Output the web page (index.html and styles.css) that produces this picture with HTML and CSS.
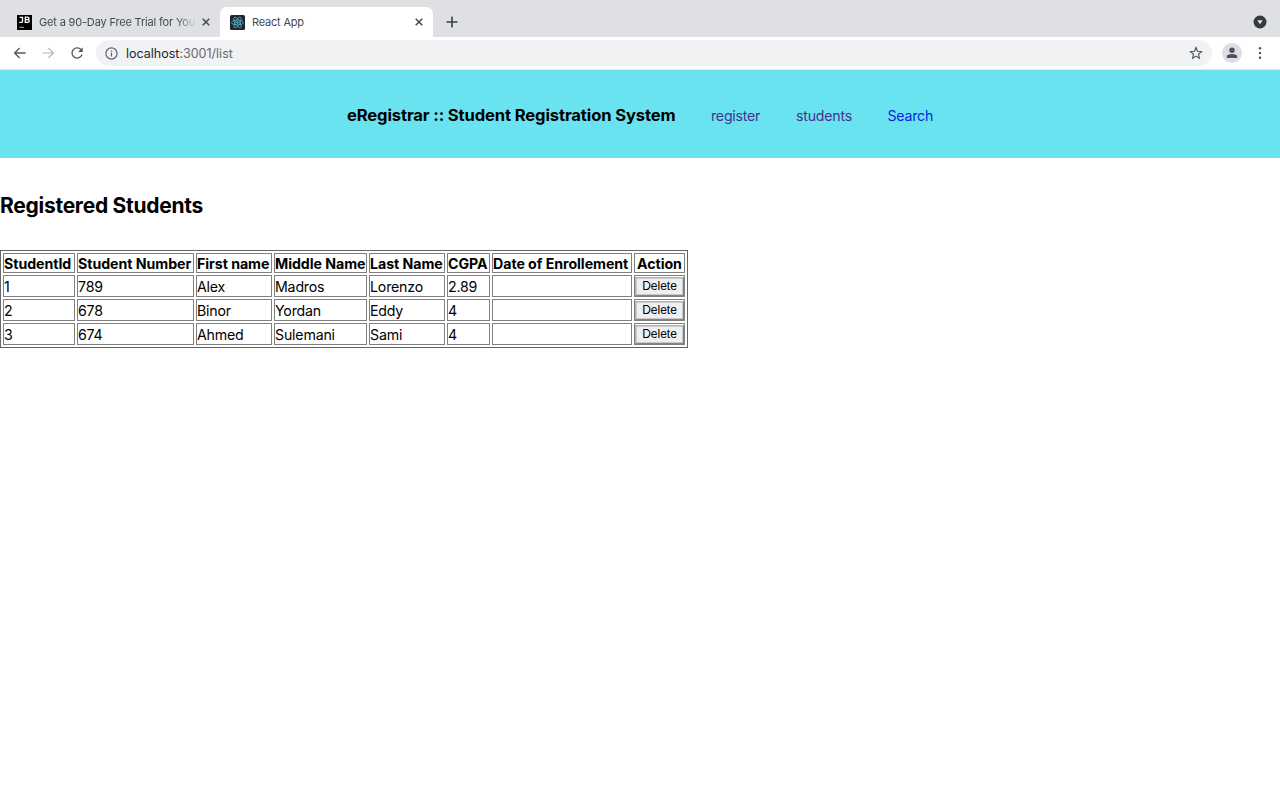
FILE: index.html
```html
<!DOCTYPE html>
<html lang="en">
<head>
<meta charset="utf-8">
<title>React App</title>
<link rel="stylesheet" href="styles.css">
</head>
<body>
<div class="tabstrip">
  <div class="tab tab-idle">
    <svg class="favicon" viewBox="0 0 15 15"><rect width="15" height="15" fill="#000"/><path d="M2.6 2.3h2.9v3.9q0 1.2-1.3 1.2H2.4M8.3 2.2v5.2h2.4q1.5-.1 1.5-1.4 0-1.1-1.2-1.3.9-.3.9-1.2 0-1.3-1.4-1.3zM8.4 4.7h2.5" fill="none" stroke="#fff" stroke-width="1.3"/><path d="M2.5 12.3h4.5" stroke="#ddd" stroke-width=".8"/></svg>
    <span class="tab-title title-fade">Get a 90-Day Free Trial for You</span>
    <svg class="close" viewBox="0 0 8 8"><path d="M.7.7l6.6 6.6M7.3.7L.7 7.3"/></svg>
  </div>
  <div class="tab tab-active">
    <svg class="favicon" viewBox="0 0 15 15"><rect width="15" height="15" rx="1.5" fill="#20262e"/><g fill="none" stroke="#5cb3cc" stroke-width=".8"><ellipse cx="7.5" cy="7.5" rx="6" ry="2.4"/><ellipse cx="7.5" cy="7.5" rx="6" ry="2.4" transform="rotate(60 7.5 7.5)"/><ellipse cx="7.5" cy="7.5" rx="6" ry="2.4" transform="rotate(120 7.5 7.5)"/></g><circle cx="7.5" cy="7.5" r="1.2" fill="#5cb3cc"/></svg>
    <span class="tab-title title-react">React App</span>
    <svg class="close" viewBox="0 0 8 8"><path d="M.7.7l6.6 6.6M7.3.7L.7 7.3"/></svg>
  </div>
  <svg class="plus" viewBox="0 0 12 12"><path d="M6 .5v11M.5 6h11" stroke="#3c4043" stroke-width="1.6"/></svg>
  <svg class="tab-search" viewBox="0 0 14 14"><circle cx="7" cy="7" r="6.5" fill="#35383c"/><path d="M4.3 5.2h5.4L7 9.2z" fill="#e4e6e9"/></svg>
</div>
<div class="toolbar">
  <svg class="nav-icon" viewBox="0 0 14 14"><path d="M12.6 7H1.8M6.6 2L1.6 7l5 5" fill="none" stroke="#54575b" stroke-width="1.3"/></svg>
  <svg class="nav-icon" viewBox="0 0 14 14"><path d="M1.4 7h10.8M7.4 2L12.4 7l-5 5" fill="none" stroke="#b5b7ba" stroke-width="1.2"/></svg>
  <svg class="nav-icon" viewBox="0 0 14 14"><path d="M11.4 4.2A5.1 5.1 0 1 0 12 8.4" fill="none" stroke="#54575b" stroke-width="1.3"/><path d="M12.7 1.3v4.6H8.1z" fill="#54575b"/></svg>
  <div class="address">
    <svg class="info" viewBox="0 0 13 13"><circle cx="6.5" cy="6.5" r="5.6" fill="none" stroke="#5f6368" stroke-width="1.2"/><path d="M6.5 5.8v3.6M6.5 3.4v1.4" stroke="#5f6368" stroke-width="1.3"/></svg>
    <span class="url"><span class="host">localhost</span>:3001/list</span>
    <svg class="star" viewBox="0 0 14 14"><path d="M7 1.6l1.5 3.7 4 .4-3 2.6.9 3.9L7 10.1l-3.4 2.1.9-3.9-3-2.6 4-.4z" fill="none" stroke="#54575b" stroke-width="1.2"/></svg>
  </div>
  <svg class="avatar" viewBox="0 0 20 20"><circle cx="10" cy="10" r="10" fill="#dcdee3"/><circle cx="10" cy="7.3" r="2.7" fill="#4c515b"/><path d="M4.8 15v-1.3q0-2.8 5.2-2.8t5.2 2.8V15z" fill="#4c515b"/></svg>
  <svg class="menu" viewBox="0 0 4 14"><g fill="#505358"><circle cx="2" cy="2.3" r="1.2"/><circle cx="2" cy="7" r="1.2"/><circle cx="2" cy="11.7" r="1.2"/></g></svg>
</div>
<header class="site-header">
  <h3 class="brand">eRegistrar :: Student Registration System</h3>
  <a class="link link-register">register</a>
  <a class="link link-students">students</a>
  <a class="link link-search">Search</a>
</header>
<main>
  <h2 class="heading">Registered Students</h2>
  <table class="students">
    <colgroup><col class="c-id"><col class="c-number"><col class="c-first"><col class="c-middle"><col class="c-last"><col class="c-cgpa"><col class="c-date"><col class="c-action"></colgroup>
    <thead><tr><th>StudentId</th><th>Student Number</th><th>First name</th><th>Middle Name</th><th>Last Name</th><th>CGPA</th><th>Date of Enrollement</th><th>Action</th></tr></thead>
    <tbody>
      <tr><td>1</td><td>789</td><td>Alex</td><td>Madros</td><td>Lorenzo</td><td>2.89</td><td></td><td><button class="delete">Delete</button></td></tr>
      <tr><td>2</td><td>678</td><td>Binor</td><td>Yordan</td><td>Eddy</td><td>4</td><td></td><td><button class="delete">Delete</button></td></tr>
      <tr><td>3</td><td>674</td><td>Ahmed</td><td>Sulemani</td><td>Sami</td><td>4</td><td></td><td><button class="delete">Delete</button></td></tr>
    </tbody>
  </table>
</main>
</body>
</html>
```
FILE: styles.css
```css
* { box-sizing: border-box; }
body { margin: 0; background: #fff; color: #000; font-family: Inter, sans-serif; overflow: hidden; }
svg { display: block; flex: none; }
.tabstrip { height: 37px; background: #dee0e4; display: flex; align-items: flex-end; padding-left: 7px; }
.tab { height: 30px; display: flex; align-items: center; padding: 0 10px; }
.tab-idle { width: 213px; }
.tab-active { width: 213px; background: #fff; border-radius: 7px 7px 0 0; }
.favicon { width: 15px; height: 15px; margin-right: 7px; }
.tab-title { font-size: 11px; color: #45494d; white-space: nowrap; flex: 1; line-height: 16px; }
.title-fade { letter-spacing: -0.17px; -webkit-mask-image: linear-gradient(90deg, #000 84%, transparent 97%); mask-image: linear-gradient(90deg, #000 84%, transparent 97%); }
.title-react { letter-spacing: -0.2px; }
.close { width: 8px; height: 8px; }
.close path { stroke: #45494d; stroke-width: 1.5; fill: none; }
.plus { width: 12px; height: 12px; margin: 0 0 9px 13px; }
.tab-search { width: 14px; height: 14px; margin: 0 13px 8px auto; }
.toolbar { height: 33px; display: flex; align-items: center; padding: 0 18px 0 12.5px; border-bottom: 1px solid #e3e6e8; }
.nav-icon { width: 14px; height: 14px; margin-right: 14.5px; }
.address { height: 26px; width: 1116px; margin-left: -2px; border-radius: 13px; background: #f1f2f4; display: flex; align-items: center; padding: 0 9px; }
.info { width: 13px; height: 13px; margin-right: 8px; }
.url { font-size: 12.5px; color: #65696e; flex: 1; }
.host { color: #25282c; }
.star { width: 14px; height: 14px; }
.avatar { width: 20px; height: 20px; margin-left: 9.5px; }
.menu { width: 4px; height: 14px; margin-left: auto; }
.site-header { height: 88px; background: #69e3ef; display: flex; align-items: center; padding: 2px 0 0 347px; }
.brand { margin: 0; width: 364px; font-size: 16.6px; font-weight: 700; letter-spacing: -0.13px; white-space: nowrap; }
.link { font-size: 14.2px; letter-spacing: -0.24px; padding-top: 1px; }
.link-register { width: 85px; color: #45308f; }
.link-students { width: 91.5px; color: #45308f; }
.link-search { color: #0a25dc; }
.heading { margin: 0; padding-top: 33px; height: 92px; font-size: 21px; letter-spacing: -0.27px; line-height: 30px; font-weight: 700; }
.students { width: 688px; table-layout: fixed; border: 1px solid #666; border-spacing: 2px; font-size: 14.2px; letter-spacing: -0.2px; }
.students th, .students td { border: 1px solid #808080; padding: 2px 0 0; white-space: nowrap; text-align: left; height: 22px; line-height: 18px; }
.students th { height: 20px; font-weight: 700; letter-spacing: -0.05px; padding: 1px 0 0; line-height: 17px; text-align: left; }
.students td:last-child { padding: 0; }
.students th:last-child { padding-left: 2px; }
.c-id { width: 72px; }
.c-number { width: 117px; }
.c-first { width: 76px; }
.c-middle { width: 93px; }
.c-last { width: 76px; }
.c-cgpa { width: 43px; }
.c-date { width: 140px; }
.c-action { width: 51px; }
.delete { display: block; width: 49px; height: 19px; margin: 0; padding: 0; font: 12px "Liberation Sans", sans-serif; letter-spacing: 0; border: 1px solid; border-color: #b5b5b5 #858585 #858585 #b5b5b5; box-shadow: inset 0 0 0 1px #c9c9c9; background: #efefef; color: #000; }
```
